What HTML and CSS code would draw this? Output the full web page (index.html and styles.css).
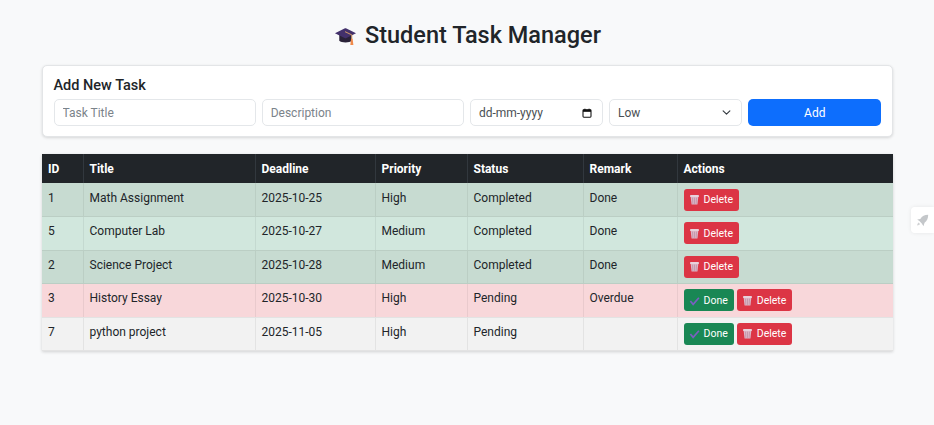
FILE: index.html
```html
<!DOCTYPE html>
<html lang="en">
<head>
<meta charset="utf-8">
<title>Student Task Manager</title>
<link rel="stylesheet" href="styles.css">
</head>
<body>
<main class="page">
  <h1 class="title">
    <svg class="cap" viewBox="0 0 24 24" width="23" height="23" aria-hidden="true">
      <path d="M5.500 11v6.500c2 2.400 11 2.400 13 0V11z" fill="#2a2238"/>
      <path d="M1 9.600 11 4.600c.7-.3 1.300-.3 2 0l10 5-10 5c-.7.3-1.300.3-2 0z" fill="#43316b"/>
      <path d="M11.500 8 18.600 11.400V16" fill="none" stroke="#d9a066" stroke-width="1"/>
      <path d="M17.800 15.500h1.600l.8 6.500h-3.200z" fill="#f08a4b"/>
    </svg>
    <span>Student Task Manager</span>
  </h1>

  <section class="card">
    <h2 class="card-title">Add New Task</h2>
    <form class="task-form">
      <input class="field" type="text" placeholder="Task Title">
      <input class="field" type="text" placeholder="Description">
      <div class="field date-field">
        <span>dd-mm-yyyy</span>
        <svg viewBox="0 0 12 12" width="10" height="10" aria-hidden="true"><rect x="1.200" y="2" width="9.600" height="9" rx="1" fill="none" stroke="#111" stroke-width="1.300"/><rect x="1.200" y="2" width="9.600" height="2.600" fill="#111"/><path d="M3.500.8v2M8.500.8v2" stroke="#111" stroke-width="1.200"/></svg>
      </div>
      <div class="field select-field">
        <span>Low</span>
        <svg viewBox="0 0 16 16" width="9" height="9" aria-hidden="true"><path d="m2 5 6 6 6-6" fill="none" stroke="#343a40" stroke-width="2" stroke-linecap="round" stroke-linejoin="round"/></svg>
      </div>
      <button class="btn-add" type="button">Add</button>
    </form>
  </section>

  <table class="tasks">
    <colgroup>
      <col class="c-id"><col class="c-title"><col class="c-deadline"><col class="c-priority"><col class="c-status"><col class="c-remark"><col class="c-actions">
    </colgroup>
    <thead>
      <tr><th>ID</th><th>Title</th><th>Deadline</th><th>Priority</th><th>Status</th><th>Remark</th><th>Actions</th></tr>
    </thead>
    <tbody>
      <tr class="row-done-dark">
        <td>1</td><td>Math Assignment</td><td>2025-10-25</td><td>High</td><td>Completed</td><td>Done</td>
        <td><div class="actions"><button class="btn btn-del" type="button"><svg class="ico" viewBox="0 0 12 12" aria-hidden="true"><use href="#trash"/></svg>Delete</button></div></td>
      </tr>
      <tr class="row-done">
        <td>5</td><td>Computer Lab</td><td>2025-10-27</td><td>Medium</td><td>Completed</td><td>Done</td>
        <td><div class="actions"><button class="btn btn-del" type="button"><svg class="ico" viewBox="0 0 12 12" aria-hidden="true"><use href="#trash"/></svg>Delete</button></div></td>
      </tr>
      <tr class="row-done-dark">
        <td>2</td><td>Science Project</td><td>2025-10-28</td><td>Medium</td><td>Completed</td><td>Done</td>
        <td><div class="actions"><button class="btn btn-del" type="button"><svg class="ico" viewBox="0 0 12 12" aria-hidden="true"><use href="#trash"/></svg>Delete</button></div></td>
      </tr>
      <tr class="row-overdue">
        <td>3</td><td>History Essay</td><td>2025-10-30</td><td>High</td><td>Pending</td><td>Overdue</td>
        <td><div class="actions"><button class="btn btn-done" type="button"><svg class="ico" viewBox="0 0 12 12" aria-hidden="true"><use href="#tick"/></svg>Done</button><button class="btn btn-del" type="button"><svg class="ico" viewBox="0 0 12 12" aria-hidden="true"><use href="#trash"/></svg>Delete</button></div></td>
      </tr>
      <tr class="row-plain">
        <td>7</td><td>python project</td><td>2025-11-05</td><td>High</td><td>Pending</td><td></td>
        <td><div class="actions"><button class="btn btn-done" type="button"><svg class="ico" viewBox="0 0 12 12" aria-hidden="true"><use href="#tick"/></svg>Done</button><button class="btn btn-del" type="button"><svg class="ico" viewBox="0 0 12 12" aria-hidden="true"><use href="#trash"/></svg>Delete</button></div></td>
      </tr>
    </tbody>
  </table>
</main>

<aside class="float-tab">
  <svg viewBox="0 0 16 16" width="13" height="13" aria-hidden="true"><path d="M15 1c-4.500.2-7.500 1.800-9.700 5L1.500 6.800l3 2.200 2.600 2.700 2.100 3.300 1.300-4.300C13.500 8.500 15 5.500 15 1z" fill="#c4c7ca"/><path d="M3.200 10.500c-1 .7-1.600 1.800-1.800 3.700 1.800-.2 3-.9 3.600-1.900z" fill="#d0d2d4"/></svg>
</aside>

<svg class="defs" width="0" height="0" aria-hidden="true">
  <symbol id="trash" viewBox="0 0 12 12">
    <path d="M1.800 3h8.400l-1 8.500H2.800z" fill="#dcb6c6"/>
    <path d="M3.800 4l.4 6.800M6 4v6.800M8.200 4l-.4 6.800" stroke="#b98aa0" stroke-width=".7"/>
    <rect x="1.200" y="1" width="9.600" height="2.200" rx=".6" fill="#e8d2dc"/>
  </symbol>
  <symbol id="tick" viewBox="0 0 12 12">
    <path d="M1.500 6.500 4.500 10.200 10.800 3" fill="none" stroke="#7a5fc0" stroke-width="1.800"/>
  </symbol>
</svg>
</body>
</html>
```

FILE: styles.css
```css
* { box-sizing: border-box; }

html, body { height: 100%; }

body {
  margin: 0;
  background: #f8f9fa;
  color: #212529;
  font-family: Roboto, "Noto Sans", sans-serif;
  font-size: 12px;
  overflow: hidden;
}

.page {
  width: 851px;
  margin: 0 0 0 42px;
  padding-top: 19px;
}

.title {
  display: flex;
  justify-content: center;
  align-items: center;
  gap: 8px;
  margin: 0 0 13px;
  height: 33px;
  font-size: 23.500px;
  font-weight: 500;
  line-height: 33px;
}

.cap { flex: none; }

.card {
  background: #fff;
  border: 1px solid #e3e5e7;
  border-radius: 5px;
  box-shadow: 0 1px 3px rgba(0, 0, 0, .14);
  padding: 10px 10.500px;
  height: 72px;
  margin-bottom: 17px;
}

.card-title {
  margin: 0 0 3px;
  font-size: 14.500px;
  font-weight: 500;
  line-height: 20px;
}

.task-form {
  display: grid;
  grid-template-columns: 1.518fr 1.518fr 1fr 1fr 1fr;
  gap: 5.600px;
}

.field {
  height: 27px;
  min-width: 0;
  border: 1px solid #e4e7ea;
  border-radius: 5px;
  background: #fff;
  padding: 0 8px;
  color: #212529;
  font: inherit;
}

.field::placeholder { color: #7b838a; opacity: 1; }

.date-field,
.select-field {
  display: flex;
  align-items: center;
  justify-content: space-between;
  color: #4a4f54;
  padding-right: 10px;
}

.btn-add {
  height: 27px;
  border: 0;
  border-radius: 5px;
  background: #0d6efd;
  color: #fff;
  font: inherit;
}

.tasks {
  width: 851px;
  table-layout: fixed;
  border-collapse: collapse;
  box-shadow: 0 1px 3px rgba(0, 0, 0, .16);
}

.c-id { width: 41px; }
.c-title { width: 172px; }
.c-deadline { width: 120px; }
.c-priority { width: 92px; }
.c-status { width: 116px; }
.c-remark { width: 94px; }
.c-actions { width: 216px; }

.tasks th {
  height: 29px;
  background: #212529;
  color: #fff;
  padding: 0 6px;
  border-left: 1px solid #32383e;
  text-align: left;
  font-weight: 700;
}

.tasks td {
  height: 33.500px;
  padding: 0 6px 4px;
  border-left: 1px solid rgba(0, 0, 0, .06);
  border-bottom: 1px solid rgba(0, 0, 0, .06);
  vertical-align: middle;
}

.tasks th:first-child,
.tasks td:first-child { border-left: 0; }

.row-done-dark td { background: #c7dbd1; }
.row-done td { background: #d1e7dd; }
.row-overdue td { background: #f8d7da; }
.row-plain td { background: #f2f2f2; }

.actions {
  display: flex;
  gap: 3px;
  padding-top: 4px;
}

.btn {
  display: inline-flex;
  align-items: center;
  gap: 4px;
  height: 22px;
  padding: 0 6px 0 5px;
  border: 0;
  border-radius: 3px;
  color: #fff;
  font: inherit;
  font-size: 10.500px;
}

.btn-del { background: #dc3545; }
.btn-done { background: #198754; }

.ico { width: 11px; height: 11px; flex: none; }

.float-tab {
  position: fixed;
  top: 207px;
  right: 0;
  width: 23px;
  height: 26px;
  display: flex;
  align-items: center;
  justify-content: center;
  background: #fff;
  border-radius: 4px 0 0 4px;
  box-shadow: 0 0 4px rgba(0, 0, 0, .08);
}

.defs { position: absolute; }
```
